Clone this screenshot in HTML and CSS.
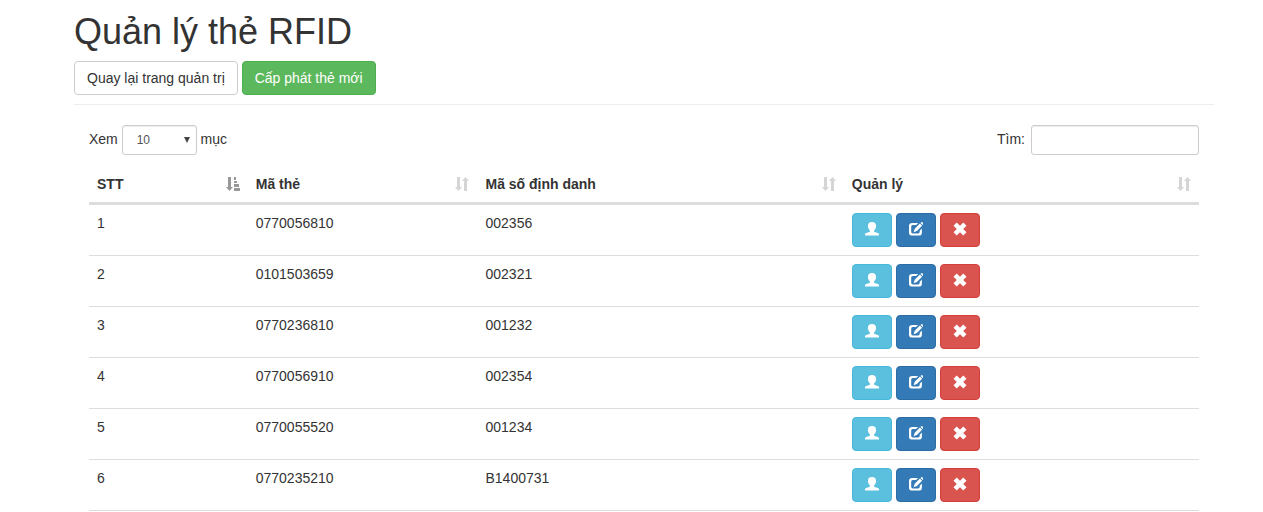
FILE: index.html
```html
<!DOCTYPE html>
<html lang="vi">
<head>
<meta charset="utf-8">
<meta name="viewport" content="width=device-width, initial-scale=1">
<title>Quản lý thẻ RFID</title>
<link rel="stylesheet" href="styles.css">
</head>
<body>
<svg class="sprite" aria-hidden="true">
  <symbol id="user" viewBox="0 0 14 14"><path d="M7 0C9.8 0 11.1 1.5 11 3.8C11.3 4.5 11.1 5.3 10.7 5.7C10.4 7 9.9 7.8 9 8.5V9.5C9.4 10.2 13.3 10.6 14.3 12.2V13.6H-.3V12.2C.7 10.6 4.6 10.2 5 9.5V8.5C4.1 7.8 3.6 7 3.3 5.7C2.9 5.3 2.7 4.5 3 3.8C2.9 1.5 4.2 0 7 0Z"/></symbol>
  <symbol id="edit" viewBox="0 0 14 14"><path d="M9.2 .9L7.1 3.1H3.8Q2.2 3.1 2.2 4.7V9.8Q2.2 11.4 3.8 11.4H9.1Q10.7 11.4 10.7 9.8V8.7L12.9 6.5V10.4Q12.9 13.6 9.7 13.6H3.1Q-.1 13.6 -.1 10.4V4.1Q-.1 .9 3.1 .9Z"/><path d="M10.9 1.5L13.1 3.7L7.9 8.9L4.6 10.2L5.7 6.7ZM11.5.9L12.3.2Q12.8-.2 13.3.2L14.4 1.3Q14.8 1.8 14.4 2.3L13.7 3.1Z"/></symbol>
  <symbol id="remove" viewBox="0 0 14 14"><path d="M3.7.5L7 3.8L10.3.5L13.5 3.7L10.2 7L13.5 10.3L10.3 13.5L7 10.2L3.7 13.5L.5 10.3L3.8 7L.5 3.7Z"/></symbol>
  <symbol id="sort" viewBox="0 0 14 14"><path d="M2 0H5V10H7L3.5 14L0 10H2ZM9 14H12V4H14L10.5 0L7 4H9Z"/></symbol>
  <symbol id="sort-asc" viewBox="0 0 14 14"><path d="M2 0H5V10H7L3.5 14L0 10H2ZM8 0H10V3H8ZM8 4H11V6H8ZM8 7H13V10H8ZM8 11H14V14H8Z"/></symbol>
</svg>
<main class="container">
  <header class="page-header">
    <h1>Quản lý thẻ RFID</h1>
    <button type="button" class="btn btn-default">Quay lại trang quản trị</button>
    <button type="button" class="btn btn-success">Cấp phát thẻ mới</button>
  </header>
  <section class="content">
    <div class="toolbar">
      <div><label for="length">Xem</label>
        <span class="select-wrap"><select id="length" class="form-control"><option>10</option><option>25</option><option>50</option></select><svg class="caret" viewBox="0 0 6 6" aria-hidden="true"><path d="M0 0H6L3 6Z"/></svg></span>
        <span>mục</span></div>
      <div class="search"><label for="search">Tìm:</label><input id="search" type="search" class="form-control"></div>
    </div>
    <table class="table">
      <colgroup><col class="col-index"><col class="col-card"><col class="col-code"><col></colgroup>
      <thead>
        <tr>
          <th scope="col" aria-sort="ascending"><div class="heading">STT<svg class="icon sorted" aria-hidden="true"><use href="#sort-asc"/></svg></div></th>
          <th scope="col"><div class="heading">Mã thẻ<svg class="icon sortable" aria-hidden="true"><use href="#sort"/></svg></div></th>
          <th scope="col"><div class="heading">Mã số định danh<svg class="icon sortable" aria-hidden="true"><use href="#sort"/></svg></div></th>
          <th scope="col"><div class="heading">Quản lý<svg class="icon sortable" aria-hidden="true"><use href="#sort"/></svg></div></th>
        </tr>
      </thead>
      <tbody>
        <tr><td>1</td><td>0770056810</td><td>002356</td><td class="actions">
          <button type="button" class="btn btn-info" aria-label="Người dùng"><svg class="icon"><use href="#user"/></svg></button>
          <button type="button" class="btn btn-primary" aria-label="Sửa"><svg class="icon"><use href="#edit"/></svg></button>
          <button type="button" class="btn btn-danger" aria-label="Xóa"><svg class="icon"><use href="#remove"/></svg></button></td></tr>
        <tr><td>2</td><td>0101503659</td><td>002321</td><td class="actions">
          <button type="button" class="btn btn-info" aria-label="Người dùng"><svg class="icon"><use href="#user"/></svg></button>
          <button type="button" class="btn btn-primary" aria-label="Sửa"><svg class="icon"><use href="#edit"/></svg></button>
          <button type="button" class="btn btn-danger" aria-label="Xóa"><svg class="icon"><use href="#remove"/></svg></button></td></tr>
        <tr><td>3</td><td>0770236810</td><td>001232</td><td class="actions">
          <button type="button" class="btn btn-info" aria-label="Người dùng"><svg class="icon"><use href="#user"/></svg></button>
          <button type="button" class="btn btn-primary" aria-label="Sửa"><svg class="icon"><use href="#edit"/></svg></button>
          <button type="button" class="btn btn-danger" aria-label="Xóa"><svg class="icon"><use href="#remove"/></svg></button></td></tr>
        <tr><td>4</td><td>0770056910</td><td>002354</td><td class="actions">
          <button type="button" class="btn btn-info" aria-label="Người dùng"><svg class="icon"><use href="#user"/></svg></button>
          <button type="button" class="btn btn-primary" aria-label="Sửa"><svg class="icon"><use href="#edit"/></svg></button>
          <button type="button" class="btn btn-danger" aria-label="Xóa"><svg class="icon"><use href="#remove"/></svg></button></td></tr>
        <tr><td>5</td><td>0770055520</td><td>001234</td><td class="actions">
          <button type="button" class="btn btn-info" aria-label="Người dùng"><svg class="icon"><use href="#user"/></svg></button>
          <button type="button" class="btn btn-primary" aria-label="Sửa"><svg class="icon"><use href="#edit"/></svg></button>
          <button type="button" class="btn btn-danger" aria-label="Xóa"><svg class="icon"><use href="#remove"/></svg></button></td></tr>
        <tr><td>6</td><td>0770235210</td><td>B1400731</td><td class="actions">
          <button type="button" class="btn btn-info" aria-label="Người dùng"><svg class="icon"><use href="#user"/></svg></button>
          <button type="button" class="btn btn-primary" aria-label="Sửa"><svg class="icon"><use href="#edit"/></svg></button>
          <button type="button" class="btn btn-danger" aria-label="Xóa"><svg class="icon"><use href="#remove"/></svg></button></td></tr>
      </tbody>
    </table>
  </section>
</main>
</body>
</html>
```
FILE: styles.css
```css
* { box-sizing: border-box; }
body {
  margin: 0;
  background: #fff;
  color: #333;
  font-family: "Liberation Sans", Arial, sans-serif;
  font-size: 14px;
  line-height: 20px;
}
.sprite { display: none; }
.container { padding: 12px 49px 0 74px; }
.page-header {
  margin-bottom: 20px;
  padding-bottom: 9px;
  border-bottom: 1px solid #eee;
}
h1 {
  margin: 0 0 9px;
  font-size: 36px;
  font-weight: 500;
  line-height: 40px;
}
.btn {
  padding: 6px 12px;
  border: 1px solid transparent;
  border-radius: 4px;
  color: #fff;
  font: inherit;
  vertical-align: middle;
  cursor: pointer;
}
.btn-default { background: #fff; border-color: #ccc; color: #333; }
.btn-success { background: #5cb85c; border-color: #4cae4c; }
.btn-info { background: #5bc0de; border-color: #46b8da; }
.btn-primary { background: #337ab7; border-color: #2e6da4; }
.btn-danger { background: #d9534f; border-color: #d43f3a; }
.icon {
  width: 14px;
  height: 14px;
  fill: currentColor;
  overflow: visible;
}
.btn .icon { display: block; margin: 2px 0 4px; }
.content { padding: 0 15px; }
.toolbar {
  display: flex;
  justify-content: space-between;
  margin-bottom: 11px;
  line-height: 28px;
}
.form-control {
  height: 30px;
  border: 1px solid #ccc;
  border-radius: 3px;
  background: #fff;
  box-shadow: inset 0 1px 1px rgba(0, 0, 0, .075);
  color: #555;
  font: inherit;
  font-size: 12px;
  vertical-align: top;
}
.select-wrap { display: inline-block; position: relative; vertical-align: top; }
select.form-control { width: 75px; padding: 0 14px; line-height: 26px; appearance: none; }
.caret {
  position: absolute;
  top: 12px;
  right: 7px;
  width: 6px;
  height: 6px;
  fill: #444;
  pointer-events: none;
}
.search { display: flex; gap: 6px; }
input.form-control { width: 168px; padding: 5px 10px; }
.table {
  width: 100%;
  table-layout: fixed;
  border-collapse: separate;
  border-spacing: 0;
}
.col-index { width: 14.3%; }
.col-card { width: 20.7%; }
.col-code { width: 33%; }
th, td { padding: 8px; text-align: left; vertical-align: top; }
th { border-bottom: 3px solid #ddd; }
td { border-bottom: 1px solid #ddd; }
.heading { display: flex; align-items: center; justify-content: space-between; }
.sorted { opacity: .5; }
.sortable { opacity: .2; }
.actions { line-height: 0; }
.actions .btn { line-height: 20px; }
```
